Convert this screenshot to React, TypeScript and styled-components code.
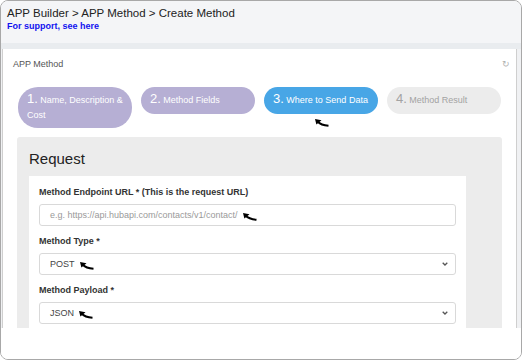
import React from 'react';
import styled, { createGlobalStyle } from 'styled-components';

const GlobalStyle = createGlobalStyle`
	html, body {
		margin: 0;
		padding: 0;
		background: #ffffff;
		font-family: 'Liberation Sans', Arial, sans-serif;
	}
`;

const Frame = styled.div`
	width: 520px;
	height: 358px;
	border: 1px solid #a8a8a8;
	border-radius: 8px;
	overflow: hidden;
	background: #ffffff;
	display: flex;
	flex-direction: column;
`;

const Header = styled.div`
	height: 42px;
	flex-shrink: 0;
	box-sizing: border-box;
	padding: 5px 6px 0;
	background: #f4f5f7;
`;

const Crumbs = styled.div`
	font-size: 11.5px;
	color: #222;
	line-height: 14px;
`;

const Support = styled.a`
	display: block;
	margin-top: 1px;
	font-size: 9px;
	font-weight: bold;
	color: #1212f0;
	text-decoration: none;
`;

const Band = styled.div`
	height: 6px;
	flex-shrink: 0;
	background: #e9ecef;
`;

const Body = styled.div`
	display: flex;
	height: 279px;
	flex-shrink: 0;
	background: #f0f1f3;
	padding-left: 1px;
`;

const Panel = styled.div`
	flex: 1;
	background: #ffffff;
	border-left: 1px solid #cfcfcf;
	border-right: 1px solid #cfcfcf;
	display: flex;
	flex-direction: column;
	padding: 0 14px;
	overflow: hidden;
`;

const Rail = styled.div`
	width: 4px;
`;

const PanelHead = styled.div`
	display: flex;
	justify-content: space-between;
	align-items: center;
	height: 27px;
	flex-shrink: 0;
	padding-top: 2px;
	box-sizing: border-box;
	margin-left: -4px;
	margin-right: -8px;
	font-size: 9px;
	color: #555;
`;

const Refresh = styled.span`
	font-size: 9px;
	color: #b0b0b0;
`;

const Steps = styled.div`
	display: flex;
	gap: 9px;
	align-items: flex-start;
	flex-shrink: 0;
	margin-top: 11px;
	margin-left: 1px;
`;

type Tone = 'done' | 'active' | 'todo';

const tones: Record<Tone, { bg: string; fg: string }> = {
	done: { bg: '#b6afd4', fg: '#ffffff' },
	active: { bg: '#48a6e6', fg: '#ffffff' },
	todo: { bg: '#ececec', fg: '#a3a3a3' }
};

const StepWrap = styled.div`
	position: relative;
	width: 114px;
	flex-shrink: 0;
`;

const Pill = styled.div<{ $tone: Tone }>`
	box-sizing: border-box;
	min-height: 27px;
	padding: 6px 3px 5px 9px;
	border-radius: ${(p) => (p.$tone === 'done' ? '20px' : '14px')};
	background: ${(p) => tones[p.$tone].bg};
	color: ${(p) => tones[p.$tone].fg};
	font-size: 9px;
	line-height: 15px;
`;

const Num = styled.span`
	font-size: 13px;
	line-height: 0;
`;

const Request = styled.div`
	margin-top: 9px;
	flex: 1;
	min-height: 0;
	background: #ececec;
	border-radius: 3px 3px 0 0;
	padding: 0 36px 0 12px;
	display: flex;
	flex-direction: column;
`;

const RequestTitle = styled.div`
	font-size: 15px;
	color: #222;
	height: 39px;
	flex-shrink: 0;
	line-height: 28px;
	padding-top: 8px;
	box-sizing: border-box;
`;

const Card = styled.div`
	flex: 1;
	background: #ffffff;
	padding: 10px 10px 0 10px;
	display: flex;
	flex-direction: column;
`;

const Label = styled.div`
	font-size: 9px;
	font-weight: bold;
	color: #333;
	line-height: 12px;
	margin-bottom: 6px;
`;

const Field = styled.div`
	display: flex;
	align-items: center;
	justify-content: space-between;
	height: 22px;
	flex-shrink: 0;
	box-sizing: border-box;
	border: 1px solid #d9d9d9;
	border-radius: 3px;
	padding: 0 7px 0 10px;
	margin-bottom: 9px;
	font-size: 9px;

	&:last-child {
		margin-bottom: 0;
	}
`;

const Value = styled.span<{ $muted?: boolean }>`
	display: flex;
	align-items: center;
	gap: 5px;
	color: ${(p) => (p.$muted ? '#9a9a9a' : '#444')};
`;

const Footer = styled.div`
	flex: 1;
	background: #ffffff;
`;

const ArrowMark: React.FC = () => (
	<svg width="14" height="8" viewBox="0 0 14 8" style={{ marginTop: 3 }}>
		<path d="M0 0 L6.5 1.2 L1.4 5.6 Z" fill="#000" />
		<path d="M2.5 2.5 Q6 6.2 13.5 6.8" stroke="#000" strokeWidth="2" fill="none" />
	</svg>
);

const Chevron = () => (
	<svg width="6" height="4" viewBox="0 0 6 4">
		<path d="M0.7 0.8 L3 3 L5.3 0.8" stroke="#555" strokeWidth="1.3" fill="none" />
	</svg>
);

const Cursor = styled.div`
	position: absolute;
	left: 51px;
	top: 26px;
`;

const App: React.FC = () => {
	return (
		<>
			<GlobalStyle />
			<Frame>
				<Header>
					<Crumbs>APP Builder &gt; APP Method &gt; Create Method</Crumbs>
					<Support>For support, see here</Support>
				</Header>
				<Band />
				<Body>
					<Panel>
						<PanelHead>
							<span>APP Method</span>
							<Refresh>↻</Refresh>
						</PanelHead>
						<Steps>
							<StepWrap>
								<Pill $tone="done">
									<Num>1.</Num> Name, Description &amp; Cost
								</Pill>
							</StepWrap>
							<StepWrap>
								<Pill $tone="done">
									<Num>2.</Num> Method Fields
								</Pill>
							</StepWrap>
							<StepWrap>
								<Pill $tone="active">
									<Num>3.</Num> Where to Send Data
								</Pill>
								<Cursor>
									<ArrowMark />
								</Cursor>
							</StepWrap>
							<StepWrap>
								<Pill $tone="todo">
									<Num>4.</Num> Method Result
								</Pill>
							</StepWrap>
						</Steps>
						<Request>
							<RequestTitle>Request</RequestTitle>
							<Card>
								<Label>Method Endpoint URL * (This is the request URL)</Label>
								<Field>
									<Value $muted>
										e.g. https://api.hubapi.com/contacts/v1/contact/
										<ArrowMark />
									</Value>
								</Field>
								<Label>Method Type *</Label>
								<Field>
									<Value>
										POST
										<ArrowMark />
									</Value>
									<Chevron />
								</Field>
								<Label>Method Payload *</Label>
								<Field>
									<Value>
										JSON
										<ArrowMark />
									</Value>
									<Chevron />
								</Field>
							</Card>
						</Request>
					</Panel>
					<Rail />
				</Body>
				<Footer />
			</Frame>
		</>
	);
};

export default App;
